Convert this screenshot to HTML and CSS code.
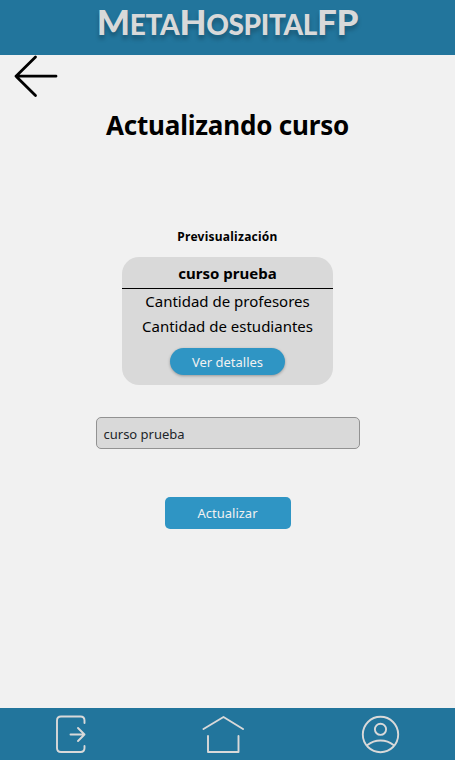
FILE: index.html
```html
<!DOCTYPE html>
<html lang="es">
<head>
<meta charset="utf-8">
<title>MetaHospitalFP</title>
<link rel="stylesheet" href="styles.css">
</head>
<body>
<header class="topbar"><div class="logo"><b>M</b>ETA<b>H</b>OSPITAL<b>FP</b></div></header>
<main class="content">
  <a class="back" href="#" aria-label="Volver">
    <svg width="46" height="44" viewBox="0 0 46 44"><path d="M23.5 2 4 21.200 23.500 40.500M4 21.200H44"/></svg>
  </a>
  <h1 class="title"><span>Actualizando curso</span></h1>
  <h2 class="preview-label"><span>Previsualización</span></h2>
  <section class="card">
    <h3 class="card-name"><span>curso prueba</span></h3>
    <p class="card-line"><span>Cantidad de profesores</span></p>
    <p class="card-line"><span>Cantidad de estudiantes</span></p>
    <button class="details"><span>Ver detalles</span></button>
  </section>
  <div class="field"><span>curso prueba</span></div>
  <button class="update"><span>Actualizar</span></button>
</main>
<nav class="bottombar">
  <a href="#" aria-label="Salir"><svg width="42" height="42" viewBox="0 0 42 42"><path d="M34.500 10V7.500Q34.500 3.500 30.500 3.500H11Q7 3.500 7 7.500V35Q7 39 11 39H30.500Q34.500 39 34.500 35V33M20.500 21.500H34.500M28 15 34.500 21.500 28 28"/></svg></a>
  <a class="home" href="#" aria-label="Inicio"><svg width="42" height="42" viewBox="0 0 42 42"><path d="M1.500 16 21.500 4 41 16M6 23V39H36.500V23"/></svg></a>
  <a href="#" aria-label="Perfil"><svg width="42" height="42" viewBox="0 0 42 42"><circle cx="21.500" cy="21.500" r="17.700"/><circle cx="21.500" cy="16.300" r="5.600"/><path d="M8.500 32Q14 27.500 21.500 27.500T34.500 32"/></svg></a>
</nav>
</body>
</html>
```
FILE: styles.css
```css
* { box-sizing: border-box; }
body {
  margin: 0;
  height: 760px;
  display: flex;
  flex-direction: column;
  overflow: hidden;
  background: #f1f1f1;
  color: #000;
  font-family: "Noto Sans", "Open Sans", sans-serif;
}
h1, h2, h3, p { margin: 0; white-space: nowrap; }
button { border: 0; padding: 0; font-family: inherit; color: #f1f1f1; background: #2f95c4; }
svg { display: block; fill: none; stroke-linecap: round; stroke-linejoin: round; }
.topbar { height: 55px; flex: none; background: #22759c; display: flex; justify-content: center; }
.logo {
  height: 42px;
  font: 900 28px/42px Lato, sans-serif;
  letter-spacing: -0.35px;
  color: #d9d9d9;
  text-shadow: 0 4px 4px rgba(0, 0, 0, 0.25);
  white-space: nowrap;
}
.logo b { font-size: 35px; font-weight: 900; }
.content { flex: 1; display: flex; flex-direction: column; align-items: center; }
.back { align-self: flex-start; margin-left: 12px; height: 44px; }
.back svg { stroke: #000; stroke-width: 2.8; }
.title { margin-top: 6px; font-size: 26px; line-height: 40px; font-weight: 700; letter-spacing: -0.2px; }
.preview-label { margin-top: 82px; font-size: 12px; line-height: 20px; font-weight: 700; letter-spacing: 0.25px; }
.card {
  margin-top: 10px;
  width: 211px;
  height: 128px;
  border-radius: 17px;
  background: #d9d9d9;
  display: flex;
  flex-direction: column;
  align-items: center;
}
.card-name { width: 100%; height: 32px; border-bottom: 1px solid #000; text-align: center; font-size: 15px; line-height: 32px; }
.card-line { font-size: 15px; line-height: 25px; }
.details { width: 115px; height: 27px; margin-top: 9px; border-radius: 14px; font-size: 13px; line-height: 28px; box-shadow: 0 1px 3px rgba(0, 0, 0, 0.3); }
.field { width: 264px; height: 32px; margin-top: 32px; padding: 1px 7px; border: 1px solid #929292; border-radius: 5px; background: #d9d9d9; color: #212529; font-size: 13px; line-height: 30px; }
.update { width: 126px; height: 32px; margin-top: 48px; border-radius: 5px; font-size: 13px; line-height: 32px; }
.bottombar { flex: none; height: 52px; padding: 5px 54px 0 50px; background: #22759c; display: flex; justify-content: space-between; }
.bottombar svg { stroke: #d9d9d9; stroke-width: 1.9; }
.home { margin-right: 5px; }
```
